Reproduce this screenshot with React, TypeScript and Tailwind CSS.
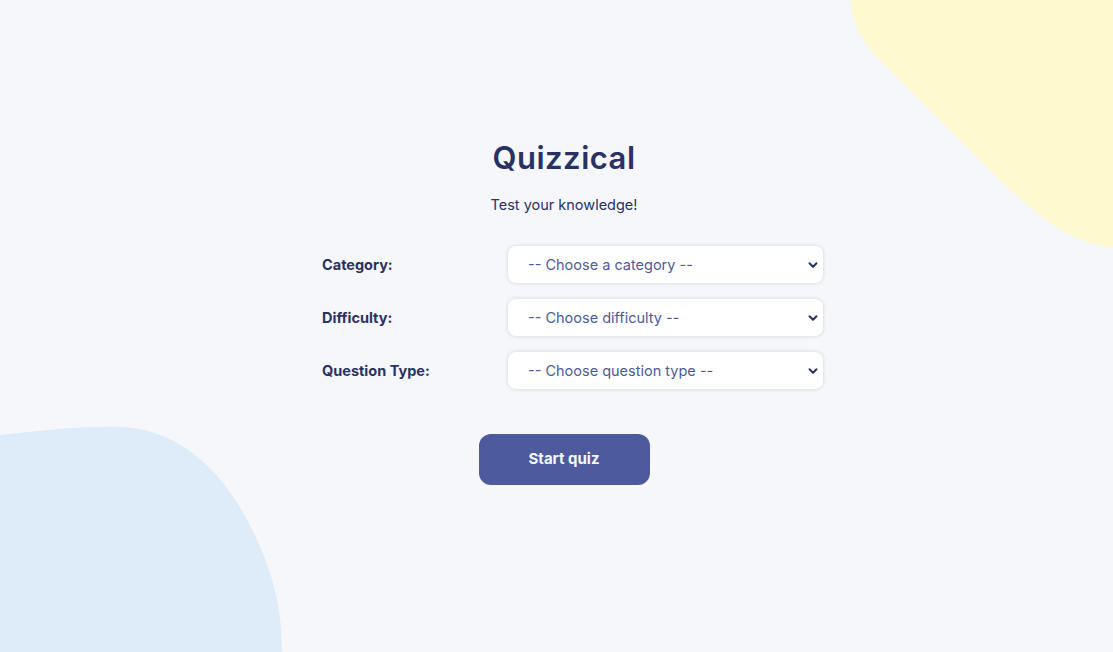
import React, { useState } from 'react';

const fields = [
    { id: 'category', label: 'Category:', placeholder: '-- Choose a category --' },
    { id: 'difficulty', label: 'Difficulty:', placeholder: '-- Choose difficulty --' },
    { id: 'type', label: 'Question Type:', placeholder: '-- Choose question type --' },
];

const Chevron = () => (
    <svg className="pointer-events-none absolute right-[4px] top-1/2 -translate-y-1/2" width="12" height="12" viewBox="0 0 12 12">
        <path d="M2.5 4.2 L6 7.7 L9.5 4.2" fill="none" stroke="#293264" strokeWidth="2" strokeLinecap="round" strokeLinejoin="round" />
    </svg>
);

const App: React.FC = () => {
    const [values, setValues] = useState<Record<string, string>>({});

    return (
        <div className="relative min-h-[652px] w-full overflow-hidden bg-[#f5f7fb] text-[#293264]" style={{ fontFamily: 'Inter, "Noto Sans", sans-serif' }}>
            {/* decorative blobs */}
            <svg className="absolute right-0 top-0" width="263" height="248" viewBox="0 0 263 248">
                <path d="M0 0 C5 30 14 44 30 60 L140 170 C180 210 220 245 263 247 L263 0 Z" fill="#fff9d0" />
            </svg>
            <svg className="absolute bottom-0 left-0" width="283" height="226" viewBox="0 0 283 226">
                <path d="M0 9 C40 5 80 0 120 1 C170 2 215 35 245 90 C272 140 282 180 282 226 L0 226 Z" fill="#deebf8" />
            </svg>

            <div className="relative flex flex-col items-center pl-[15px] pt-[138px]">
                <h1 className="text-[31px] font-semibold leading-[40px] tracking-[0.5px]">Quizzical</h1>
                <p className="mt-[18px] text-[14.5px] leading-[18px] text-[#293264]">Test your knowledge!</p>

                <form className="ml-[17px] mt-[32px] flex w-[501px] flex-col gap-[16px]" onSubmit={(e) => e.preventDefault()}>
                    {fields.map((f) => (
                        <div key={f.id} className="flex items-center justify-between">
                            <label htmlFor={f.id} className="text-[14.5px] font-bold">{f.label}</label>
                            <div className="relative w-[315px]">
                                <select
                                    id={f.id}
                                    value={values[f.id] ?? ''}
                                    onChange={(e) => setValues({ ...values, [f.id]: e.target.value })}
                                    className="h-[37px] w-full appearance-none rounded-[8px] bg-white pl-[20px] text-[14.5px] text-[#4d5b9e] shadow-[0_0_4px_rgba(0,0,0,0.15)] outline-none"
                                >
                                    <option value="">{f.placeholder}</option>
                                </select>
                                <Chevron />
                            </div>
                        </div>
                    ))}
                </form>

                <button type="submit" className="mt-[45px] h-[51px] w-[171px] rounded-[12px] bg-[#4d5b9e] text-[15px] font-bold text-[#f5f7fb]">
                    Start quiz
                </button>
            </div>
        </div>
    );
};

export default App;
